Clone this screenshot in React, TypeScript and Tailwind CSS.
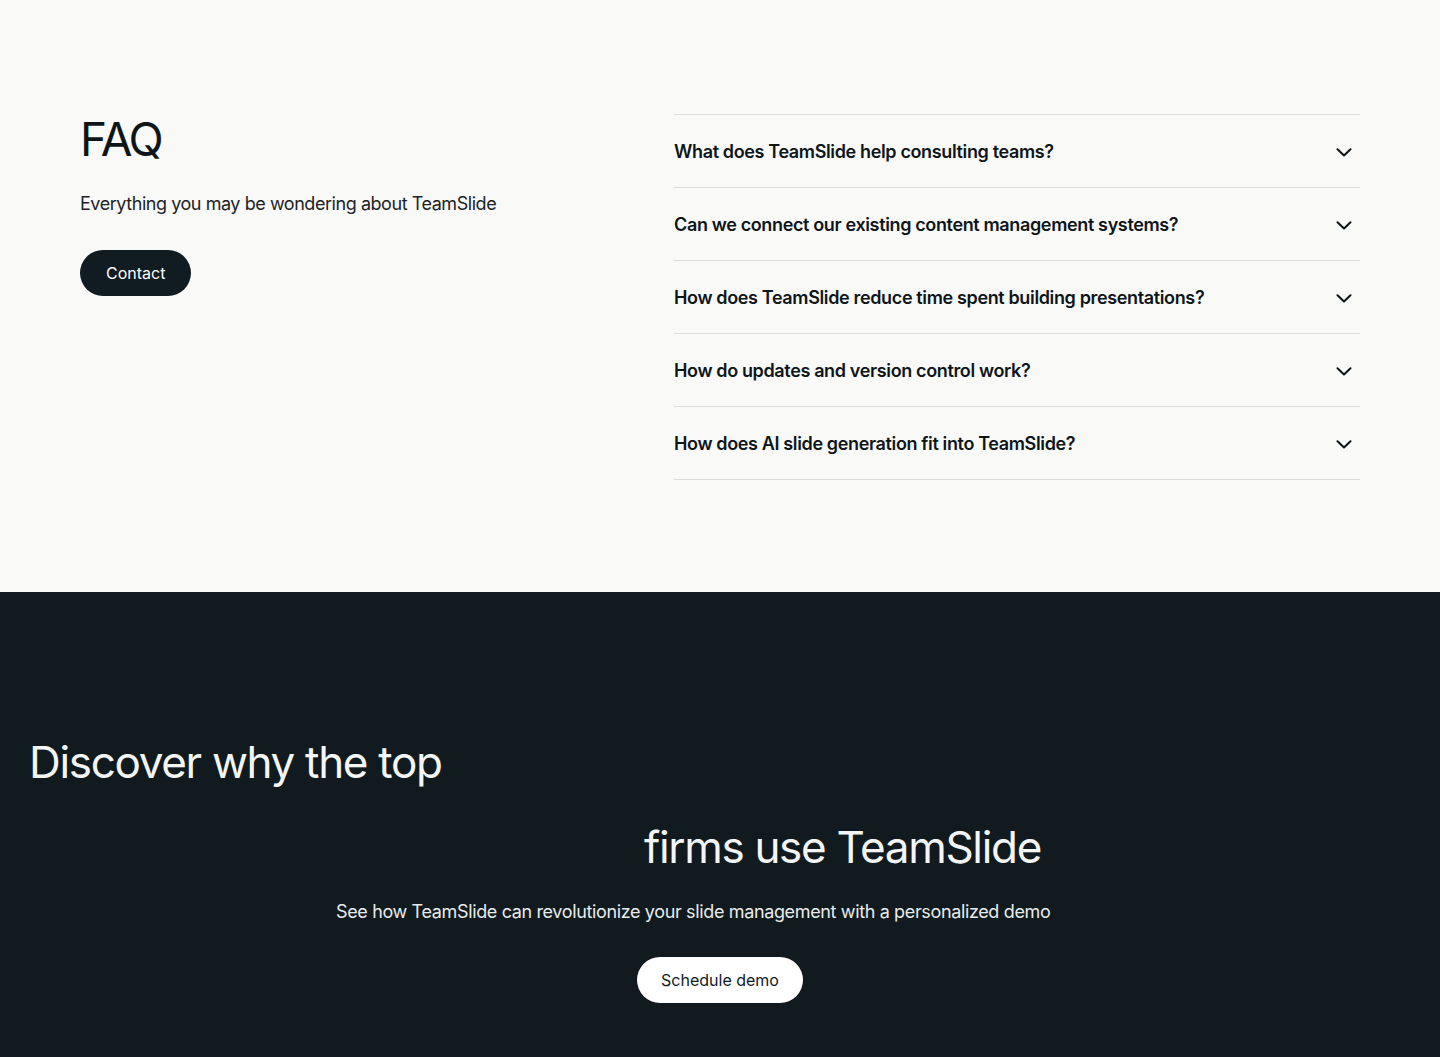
const faqs = [
  "What does TeamSlide help consulting teams?",
  "Can we connect our existing content management systems?",
  "How does TeamSlide reduce time spent building presentations?",
  "How do updates and version control work?",
  "How does AI slide generation fit into TeamSlide?",
];

function Chevron() {
  return (
    <svg
      width="16"
      height="9"
      viewBox="0 0 16 9"
      fill="none"
      stroke="currentColor"
      strokeWidth="2"
      strokeLinecap="round"
      strokeLinejoin="round"
      className="mr-2 text-[#0e1519]"
    >
      <path d="M1.5 1.25 8 7.5l6.5-6.25" />
    </svg>
  );
}

function FaqItem({ question }: { question: string }) {
  return (
    <button className="flex w-full items-center justify-between border-b border-[#dcdcda] pt-[25px] pb-[23px] text-left">
      <span className="text-[18px] leading-6 font-semibold tracking-[-0.02em] text-[#0e1519]">
        {question}
      </span>
      <Chevron />
    </button>
  );
}

export default function App() {
  return (
    <div className="min-h-screen font-['Inter',sans-serif]">
      <section className="bg-[#f9f9f8] px-20 pt-[114px] pb-[112px]">
        <div className="flex items-start justify-between">
          <div className="pt-[2px]">
            <h2 className="text-[46px] leading-none font-normal tracking-[-0.05em] text-[#0e1519]">
              FAQ
            </h2>
            <p className="mt-[28px] text-[18px] leading-7 tracking-[-0.025em] text-[#1c2327]">
              Everything you may be wondering about TeamSlide
            </p>
            <button className="mt-8 rounded-full bg-[#101c22] px-[26px] py-[11px] text-[16px] leading-6 text-white">
              Contact
            </button>
          </div>

          <div className="w-[686px] border-t border-[#dcdcda]">
            {faqs.map((q) => (
              <FaqItem key={q} question={q} />
            ))}
          </div>
        </div>
      </section>

      <section className="bg-[#101a1f] pt-[140px] pb-[54px] text-[#f4f6f6]">
        <div className="flex flex-col">
          <h2 className="pl-[29px] text-[44px] leading-[60px] tracking-[-0.03em]">
            Discover why the top
          </h2>
          <h2 className="mt-[25px] pl-[644px] text-[44px] leading-[60px] tracking-[-0.03em]">
            firms use TeamSlide
          </h2>
          <p className="mt-[21px] pl-[336px] text-[18px] leading-7 tracking-[-0.02em] text-[#e9eced]">
            See how TeamSlide can revolutionize your slide management with a personalized demo
          </p>
          <div className="mt-[31px] flex justify-center">
            <button className="rounded-full bg-white px-6 py-[11px] text-[16px] leading-6 text-[#101a1f]">
              Schedule demo
            </button>
          </div>
        </div>
      </section>
    </div>
  );
}
